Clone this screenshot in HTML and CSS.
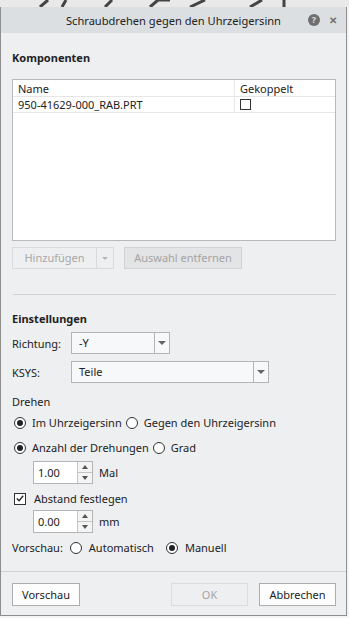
FILE: index.html
```html
<!DOCTYPE html>
<html lang="de">
<head>
    <meta charset="UTF-8">
    <title>Schraubdrehen gegen den Uhrzeigersinn</title>
    <link rel="stylesheet" href="styles.css">
</head>
<body>
    <div class="backdrop">
        <svg width="349" height="7" viewBox="0 0 349 7">
            <path d="M40 7 L48 0 M62 7 L66 0 M105 7 L112 0 M150 7 L158 0 L170 0 M190 7 L205 0 M250 7 L262 0 M284 7 L284 0" stroke="#444" stroke-width="3" fill="none"/>
        </svg>
    </div>
    <div class="dialog">
        <div class="titlebar">
            <span class="title">Schraubdrehen gegen den Uhrzeigersinn</span>
            <span class="help">?</span>
            <span class="close">&#x2715;</span>
        </div>

        <div class="content">
            <h3 class="section">Komponenten</h3>
            <div class="table">
                <div class="row head">
                    <div class="col-name">Name</div>
                    <div class="col-link">Gekoppelt</div>
                </div>
                <div class="row">
                    <div class="col-name">950-41629-000_RAB.PRT</div>
                    <div class="col-link"><span class="box"></span></div>
                </div>
            </div>

            <div class="actions">
                <div class="split">
                    <span class="split-main">Hinzufügen</span>
                    <span class="split-arrow"><span class="tri small"></span></span>
                </div>
                <span class="btn disabled grey">Auswahl entfernen</span>
            </div>

            <div class="sep"></div>

            <h3 class="section second">Einstellungen</h3>
            <div class="field">
                <label class="lbl">Richtung:</label>
                <div class="select short"><span class="select-text">-Y</span><span class="drop"><span class="tri"></span></span></div>
            </div>
            <div class="field">
                <label class="lbl">KSYS:</label>
                <div class="select long"><span class="select-text">Teile</span><span class="drop"><span class="tri"></span></span></div>
            </div>

            <div class="plain">Drehen</div>
            <div class="radios">
                <span class="radio on"></span><span>Im Uhrzeigersinn</span>
                <span class="radio"></span><span>Gegen den Uhrzeigersinn</span>
            </div>
            <div class="radios">
                <span class="radio on"></span><span>Anzahl der Drehungen</span>
                <span class="radio"></span><span>Grad</span>
            </div>
            <div class="spin-row">
                <div class="spin">
                    <span class="spin-val">1.00</span>
                    <span class="spin-btns"><span class="up"></span><span class="down"></span></span>
                </div>
                <span>Mal</span>
            </div>
            <div class="check-row">
                <span class="check">
                    <svg width="11" height="11" viewBox="0 0 11 11"><path d="M2 5.5 L4.5 8 L9 2.5" stroke="#222" stroke-width="1.4" fill="none"/></svg>
                </span>
                <span>Abstand festlegen</span>
            </div>
            <div class="spin-row tight">
                <div class="spin">
                    <span class="spin-val">0.00</span>
                    <span class="spin-btns"><span class="up"></span><span class="down"></span></span>
                </div>
                <span>mm</span>
            </div>
            <div class="radios preview">
                <span>Vorschau:</span>
                <span class="radio"></span><span>Automatisch</span>
                <span class="radio on"></span><span>Manuell</span>
            </div>
        </div>

        <div class="footer">
            <span class="btn wide-l">Vorschau</span>
            <span class="spacer"></span>
            <span class="btn disabled ok">OK</span>
            <span class="btn wide-r">Abbrechen</span>
        </div>
    </div>
</body>
</html>
```

FILE: styles.css
```css
* {
    margin: 0;
    padding: 0;
    box-sizing: border-box;
}
body {
    width: 349px;
    height: 618px;
    background: #f4f4f4;
    font-family: "Noto Sans", "Open Sans", sans-serif;
    font-size: 11px;
    color: #222;
    overflow: hidden;
    white-space: nowrap;
}
.backdrop {
    height: 7px;
    background: #e9e9e9;
}
.backdrop svg {
    display: block;
}
.dialog {
    width: 347px;
    height: 609px;
    border: 1px solid #8e8e8e;
    border-top: none;
    background: #eeeff1;
    display: flex;
    flex-direction: column;
}
.titlebar {
    height: 26px;
    background: #dcdfe1;
    display: flex;
    align-items: center;
    padding-right: 9px;
}
.title {
    flex: 1;
    text-align: center;
    padding-left: 56px;
    font-size: 11.1px;
    color: #222;
}
.help {
    width: 12px;
    height: 12px;
    border-radius: 50%;
    background: #6f6f6f;
    color: #dcdfe1;
    font-size: 9px;
    font-weight: bold;
    line-height: 12px;
    text-align: center;
    margin: 0 9px 0 18px;
}
.close {
    color: #6f6f6f;
    font-size: 10px;
    font-weight: bold;
}
.content {
    flex: 1;
    padding: 17px 10px 0 11px;
}
.section {
    font-size: 11px;
    font-weight: bold;
    line-height: 16px;
    color: #222;
}
.section.second {
    margin-top: 16px;
}
.table {
    margin-top: 13px;
    height: 162px;
    background: #fff;
    border: 1px solid #b9b9b9;
}
.row {
    display: flex;
    height: 16px;
    line-height: 15px;
    border-bottom: 1px solid #e6e6e6;
}
.row.head {
    height: 17px;
    line-height: 17px;
}
.col-name {
    width: 222px;
    padding-left: 5px;
    border-right: 1px solid #e6e6e6;
}
.col-link {
    flex: 1;
    padding-left: 5px;
    display: flex;
    align-items: center;
}
.box {
    width: 11px;
    height: 11px;
    border: 1px solid #333;
    background: #fff;
}
.actions {
    display: flex;
    margin-top: 6px;
    gap: 10px;
}
.split {
    display: flex;
    height: 22px;
    border: 1px solid #dadada;
    background: #eeeff1;
}
.split-main {
    width: 83px;
    text-align: center;
    line-height: 20px;
    color: #a8a8a8;
}
.split-arrow {
    width: 17px;
    border-left: 1px solid #dadada;
    display: flex;
    align-items: center;
    justify-content: center;
}
.tri {
    width: 0;
    height: 0;
    border-left: 4px solid transparent;
    border-right: 4px solid transparent;
    border-top: 4px solid #666;
}
.tri.small {
    border-top-color: #b5b5b5;
    border-width: 3px 3px 0 3px;
}
.btn {
    display: inline-block;
    height: 23px;
    line-height: 21px;
    border: 1px solid #adadad;
    background: #fdfdfd;
    text-align: center;
}
.btn.disabled {
    color: #a4a4a4;
    border-color: #dcdcdc;
    background: #eeeff1;
}
.btn.grey {
    height: 22px;
    line-height: 20px;
    background: #e3e4e6;
    border-color: #d3d3d3;
    width: 118px;
}
.sep {
    height: 1px;
    background: #d2d2d2;
    margin: 25px 0 0 1px;
}
.field {
    display: flex;
    align-items: center;
    margin-top: 5px;
}
.field + .field {
    margin-top: 7px;
}
.lbl {
    width: 59px;
}
.select {
    display: flex;
    height: 22px;
    border: 1px solid #b4b4b4;
    background: #f7f8f9;
}
.select-text {
    flex: 1;
    padding-left: 7px;
    line-height: 20px;
}
.select.short {
    width: 99px;
}
.select.long {
    width: 198px;
}
.drop {
    width: 15px;
    border-left: 1px solid #b4b4b4;
    display: flex;
    align-items: center;
    justify-content: center;
}
.plain {
    margin-top: 10px;
    line-height: 17px;
}
.radios {
    display: flex;
    align-items: center;
    height: 17px;
    margin-top: 4px;
}
.radios + .radios {
    margin-top: 8px;
}
.radio {
    width: 12px;
    height: 12px;
    border: 1px solid #333;
    border-radius: 50%;
    background: #fff;
    margin: 0 6px 0 2px;
    position: relative;
}
.radio.on::after {
    content: "";
    position: absolute;
    left: 2px;
    top: 2px;
    width: 6px;
    height: 6px;
    border-radius: 50%;
    background: #222;
}
.radio:not(:first-child) {
    margin-left: 4px;
}
.spin-row {
    display: flex;
    align-items: center;
    margin-top: 5px;
    padding-left: 21px;
    gap: 6px;
}
.spin-row.tight {
    margin-top: 3px;
}
.spin {
    display: flex;
    width: 60px;
    height: 23px;
    border: 1px solid #b4b4b4;
    background: #fff;
}
.spin-val {
    flex: 1;
    padding-left: 4px;
    line-height: 21px;
}
.spin-btns {
    width: 15px;
    border-left: 1px solid #c4c4c4;
    display: flex;
    flex-direction: column;
    background: #f4f4f4;
}
.spin-btns span {
    flex: 1;
    display: flex;
    align-items: center;
    justify-content: center;
}
.spin-btns .up {
    border-bottom: 1px solid #c4c4c4;
}
.spin-btns .up::after {
    content: "";
    border-left: 3px solid transparent;
    border-right: 3px solid transparent;
    border-bottom: 4px solid #555;
}
.spin-btns .down::after {
    content: "";
    border-left: 3px solid transparent;
    border-right: 3px solid transparent;
    border-top: 4px solid #555;
}
.check-row {
    display: flex;
    align-items: center;
    margin-top: 6px;
    height: 17px;
}
.check {
    width: 12px;
    height: 12px;
    border: 1px solid #333;
    background: #fff;
    margin: 0 8px 0 2px;
    display: flex;
    align-items: center;
    justify-content: center;
}
.radios.preview {
    margin-top: 6px;
}
.preview .radio {
    margin-left: 7px;
    margin-right: 7px;
}
.preview .radio.on {
    margin-left: 12px;
}
.footer {
    display: flex;
    align-items: flex-start;
    border-top: 1px solid #d2d2d2;
    padding: 11px 10px 9px 11px;
}
.spacer {
    flex: 1;
}
.btn.wide-l {
    width: 68px;
}
.btn.ok {
    width: 77px;
    margin-right: 11px;
}
.btn.wide-r {
    width: 77px;
}
```
